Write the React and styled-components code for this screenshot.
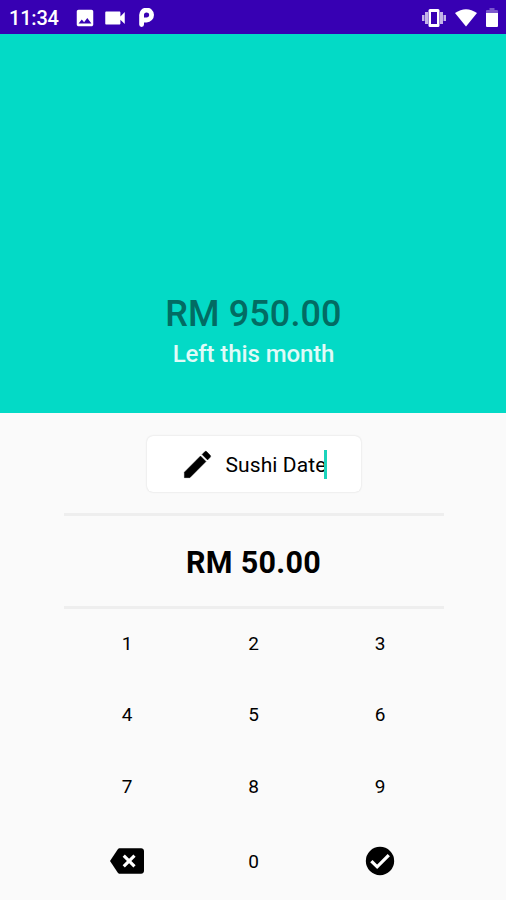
import React, { useState } from 'react';
import styled, { createGlobalStyle } from 'styled-components';
import { MdImage, MdVideocam } from 'react-icons/md';

const GlobalStyle = createGlobalStyle`
  * {
    box-sizing: border-box;
  }
  body {
    margin: 0;
    background: #fafafa;
  }
`;

const AppContainer = styled.div`
  display: flex;
  flex-direction: column;
  width: 506px;
  height: 900px;
  overflow: hidden;
  background: #fafafa;
  color: #000;
  font-family: Roboto, "Liberation Sans", sans-serif;
`;

const StatusBar = styled.div`
  display: flex;
  flex: none;
  align-items: center;
  justify-content: space-between;
  height: 34px;
  padding: 1px 8px 0 9px;
  background: #3700b3;
  color: #fff;
`;

const StatusGroup = styled.div`
  display: flex;
  align-items: center;

  svg {
    display: block;
  }
`;

const Clock = styled.span`
  width: 65px;
  font-size: 20px;
  font-weight: 500;
  line-height: 34px;
  letter-spacing: -0.2px;
`;

const StatusIcon = styled.span`
  display: flex;
  margin-left: ${props => props.$gap || 0}px;
`;

const Header = styled.header`
  display: flex;
  flex: none;
  flex-direction: column;
  align-items: center;
  justify-content: flex-end;
  height: 379px;
  padding: 0 0 43px 1px;
  background: #03dac6;
`;

const Balance = styled.div`
  margin-bottom: 2px;
  font-size: 36px;
  font-weight: 500;
  line-height: 44px;
  letter-spacing: 0.1px;
  color: #026c63;
`;

const BalanceLabel = styled.div`
  font-size: 24px;
  font-weight: 500;
  line-height: 32px;
  letter-spacing: -0.1px;
  color: #e0fbf8;
`;

const Entry = styled.main`
  display: flex;
  flex: 1;
  flex-direction: column;
  align-items: center;
  padding: 23px 0 0 1px;
`;

const NoteCard = styled.div`
  display: flex;
  align-items: center;
  width: 214px;
  height: 56px;
  padding-left: 33px;
  border-radius: 6px;
  background: #fff;
  box-shadow: 0 0 2px rgba(0, 0, 0, 0.16);
`;

const NoteText = styled.span`
  margin-left: 11px;
  padding-top: 2px;
  font-size: 21px;
  line-height: 28px;
  letter-spacing: 0.1px;
`;

const Caret = styled.span`
  width: 3px;
  height: 29px;
  margin-left: -2px;
  background: #1bd3bb;
`;

const Amount = styled.div`
  width: 380px;
  height: 96px;
  margin-top: 21px;
  border-top: 3px solid #eee;
  border-bottom: 3px solid #eee;
  font-size: 30.5px;
  font-weight: 700;
  line-height: 94px;
  letter-spacing: 0.3px;
  text-align: center;
`;

const Keypad = styled.div`
  display: grid;
  grid-template-columns: repeat(3, 126.5px);
  grid-template-rows: 69px 73px 71px 78px;
`;

const Key = styled.button`
  display: flex;
  align-items: center;
  justify-content: center;
  padding: 0;
  border: 0;
  background: none;
  color: #000;
  font-family: inherit;
  font-size: 19px;
`;

const PIcon = () => (
  <svg width="15" height="19" viewBox="0 0 15 19">
    <path
      d="M2.600 16.600V7.500A5 5 0 1 1 7.600 12H5.500"
      fill="none"
      stroke="#fff"
      strokeWidth="4.800"
      strokeLinecap="round"
    />
  </svg>
);

const VibrateIcon = () => (
  <svg width="24" height="18" viewBox="0 0 24 18" fill="#fff">
    <path fillRule="evenodd" d="M8 0h8q1.500 0 1.500 1.500v15q0 1.500-1.500 1.500H8q-1.500 0-1.500-1.500v-15Q6.500 0 8 0zm1 3v12h6V3z" />
    <path d="M3 3h3v12H3zM0 6h2.500v6H0zM18 3h3v12h-3zM21.500 6H24v6h-2.500z" opacity="0.7" />
  </svg>
);

const WifiIcon = () => (
  <svg width="22" height="18" viewBox="0 0 22 18" fill="#fff">
    <path d="M0 4Q11-3.600 22 4L11 17.500z" />
  </svg>
);

const BatteryIcon = () => (
  <svg width="12" height="19" viewBox="0 0 12 19" fill="#fff">
    <path d="M3.500 0h5v2H11q1 0 1 1v2H0V3q0-1 1-1h2.500z" opacity="0.35" />
    <path d="M0 5h12v13q0 1-1 1H1q-1 0-1-1z" />
  </svg>
);

const EditIcon = () => (
  <svg width="35" height="35" viewBox="0 0 24 24" stroke="#000" strokeWidth="0.3">
    <path d="M3 17.250V21h3.750L17.810 9.940l-3.750-3.750L3 17.250z" />
    <path d="M20.710 7.040c.39-.39.39-1.020 0-1.410l-2.340-2.340c-.39-.39-1.020-.39-1.410 0l-1.830 1.830 3.750 3.750 1.830-1.830z" />
  </svg>
);

const DeleteIcon = () => (
  <svg width="34" height="34" viewBox="0 0 24 24">
    <path d="M22 3H7c-.7 0-1.200.35-1.600.88L0 12l5.400 8.110c.4.530.9.890 1.600.890h15c1.100 0 2-.9 2-2V5c0-1.100-.9-2-2-2z" />
    <path d="M9.700 8.200l7.600 7.600M17.300 8.200l-7.600 7.600" stroke="#fff" strokeWidth="2.200" />
  </svg>
);

const ConfirmIcon = () => (
  <svg width="34" height="34" viewBox="0 0 24 24">
    <circle cx="12" cy="12" r="10" />
    <path d="M5.900 12.100L10 16.100L18.200 7.900" fill="none" stroke="#fff" strokeWidth="2.300" />
  </svg>
);

const DIGITS = ['1', '2', '3', '4', '5', '6', '7', '8', '9'];

const App = () => {
  const [cents, setCents] = useState(5000);

  const press = digit => setCents(cents * 10 + Number(digit));

  return (
    <AppContainer>
      <GlobalStyle />
      <StatusBar>
        <StatusGroup>
          <Clock>11:34</Clock>
          <StatusIcon><MdImage size={22} /></StatusIcon>
          <StatusIcon $gap={6}><MdVideocam size={26} /></StatusIcon>
          <StatusIcon $gap={11}><PIcon /></StatusIcon>
        </StatusGroup>
        <StatusGroup>
          <VibrateIcon />
          <StatusIcon $gap={9}><WifiIcon /></StatusIcon>
          <StatusIcon $gap={9}><BatteryIcon /></StatusIcon>
        </StatusGroup>
      </StatusBar>
      <Header>
        <Balance>RM 950.00</Balance>
        <BalanceLabel>Left this month</BalanceLabel>
      </Header>
      <Entry>
        <NoteCard>
          <EditIcon />
          <NoteText>Sushi Date</NoteText>
          <Caret />
        </NoteCard>
        <Amount>RM {(cents / 100).toFixed(2)}</Amount>
        <Keypad>
          {DIGITS.map(digit => (
            <Key key={digit} onClick={() => press(digit)}>{digit}</Key>
          ))}
          <Key aria-label="Delete" onClick={() => setCents(Math.floor(cents / 10))}>
            <DeleteIcon />
          </Key>
          <Key onClick={() => press('0')}>0</Key>
          <Key aria-label="Confirm">
            <ConfirmIcon />
          </Key>
        </Keypad>
      </Entry>
    </AppContainer>
  );
};

export default App;
